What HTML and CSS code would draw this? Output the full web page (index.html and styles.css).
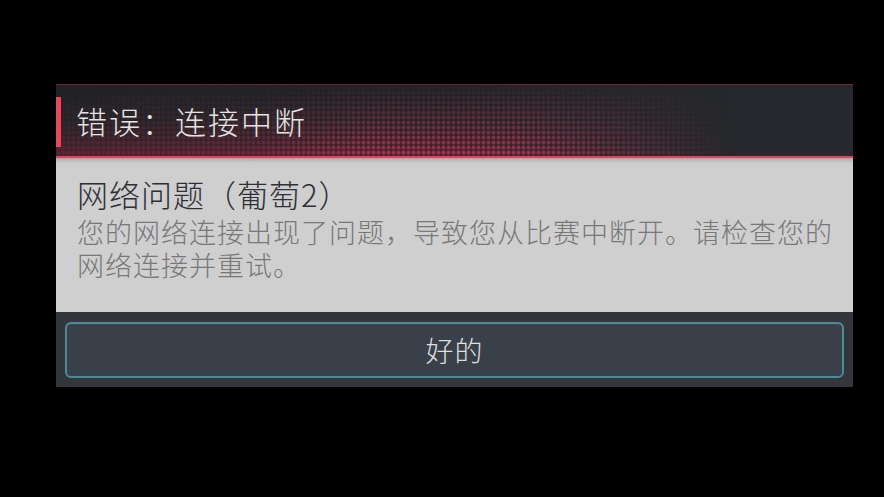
FILE: index.html
```html
<!DOCTYPE html>
<html lang="zh-CN">
<head>
<meta charset="utf-8">
<link rel="stylesheet" href="styles.css">
</head>
<body>
<div class="dialog">
  <div class="header">
    <span class="accent"></span>
    <h1 class="title">错误：连接中断</h1>
  </div>
  <div class="content">
    <div class="subtitle">网络问题（葡萄2）</div>
    <p class="message">您的网络连接出现了问题，导致您从比赛中断开。请检查您的网络连接并重试。</p>
  </div>
  <div class="footer">
    <button class="ok">好的</button>
  </div>
</div>
</body>
</html>
```
FILE: styles.css
```css
html, body {
  margin: 0;
  padding: 0;
  background: #000;
  width: 884px;
  height: 497px;
  overflow: hidden;
  font-family: "Noto Sans CJK SC", "Noto Sans", sans-serif;
}
.dialog {
  margin: 84px 0 0 56px;
  width: 797px;
  display: flex;
  flex-direction: column;
}
.header {
  position: relative;
  height: 71px;
  border-top: 1px solid #6a2636;
  border-bottom: 2px solid #e2425c;
  display: flex;
  align-items: center;
  background:
    linear-gradient(to right, rgba(37,40,44,0) 0%, rgba(37,40,44,0) 50%, rgba(37,40,44,0.7) 70%, #25282c 86%),
    linear-gradient(to bottom, #1f2226 0%, #242427 50%, #332329 75%, #4c2230 100%);
}
.header::before {
  content: "";
  position: absolute;
  inset: 0;
  background: radial-gradient(circle at 50% 50%, rgba(200,60,95,0.7) 0 1.3px, rgba(200,60,95,0) 2.5px) 0 0 / 5px 5px;
  -webkit-mask-image: linear-gradient(to right, rgba(0,0,0,0.2) 0%, rgba(0,0,0,0.45) 25%, #000 40%, #000 58%, rgba(0,0,0,0) 85%), linear-gradient(to bottom, rgba(0,0,0,0.05) 0%, rgba(0,0,0,0.5) 45%, #000 100%);
  -webkit-mask-composite: source-in;
  mask-image: linear-gradient(to right, rgba(0,0,0,0.2) 0%, rgba(0,0,0,0.45) 25%, #000 40%, #000 58%, rgba(0,0,0,0) 85%), linear-gradient(to bottom, rgba(0,0,0,0.05) 0%, rgba(0,0,0,0.5) 45%, #000 100%);
  mask-composite: intersect;
}
.accent {
  position: relative;
  width: 5px;
  height: 50px;
  margin-top: 2px;
  background: #e8485f;
  flex: none;
}
.title {
  position: relative;
  margin: 0 0 0 15px;
  font-size: 31px;
  font-weight: 300;
  letter-spacing: 2px;
  color: #e4e4e4;
  line-height: 40px;
}
.content {
  height: 154px;
  box-sizing: border-box;
  padding: 16px 20px 0 21px;
  background: linear-gradient(to bottom, #a9a9a9 0px, #c8c8c8 4px, #cfcfcf 8px, #cfcfcf 100%);
}
.subtitle {
  font-size: 31px;
  font-weight: 300;
  letter-spacing: 1px;
  line-height: 40px;
  color: #2e3035;
}
.message {
  margin: 1px 0 0 0;
  font-size: 27px;
  font-weight: 300;
  letter-spacing: 1px;
  line-height: 33px;
  color: #787878;
}
.footer {
  height: 75px;
  box-sizing: border-box;
  padding: 10px 9px 9px 9px;
  background: #33363b;
  display: flex;
}
.ok {
  flex: 1;
  margin: 0;
  height: 56px;
  border: 2px solid #4b8b9c;
  border-radius: 6px;
  background: #39404a;
  color: #dedede;
  font-family: inherit;
  font-size: 28px;
  font-weight: 300;
  letter-spacing: 1px;
  padding: 0;
  box-shadow: inset 0 1px 0 rgba(255,255,255,0.04);
}
```
